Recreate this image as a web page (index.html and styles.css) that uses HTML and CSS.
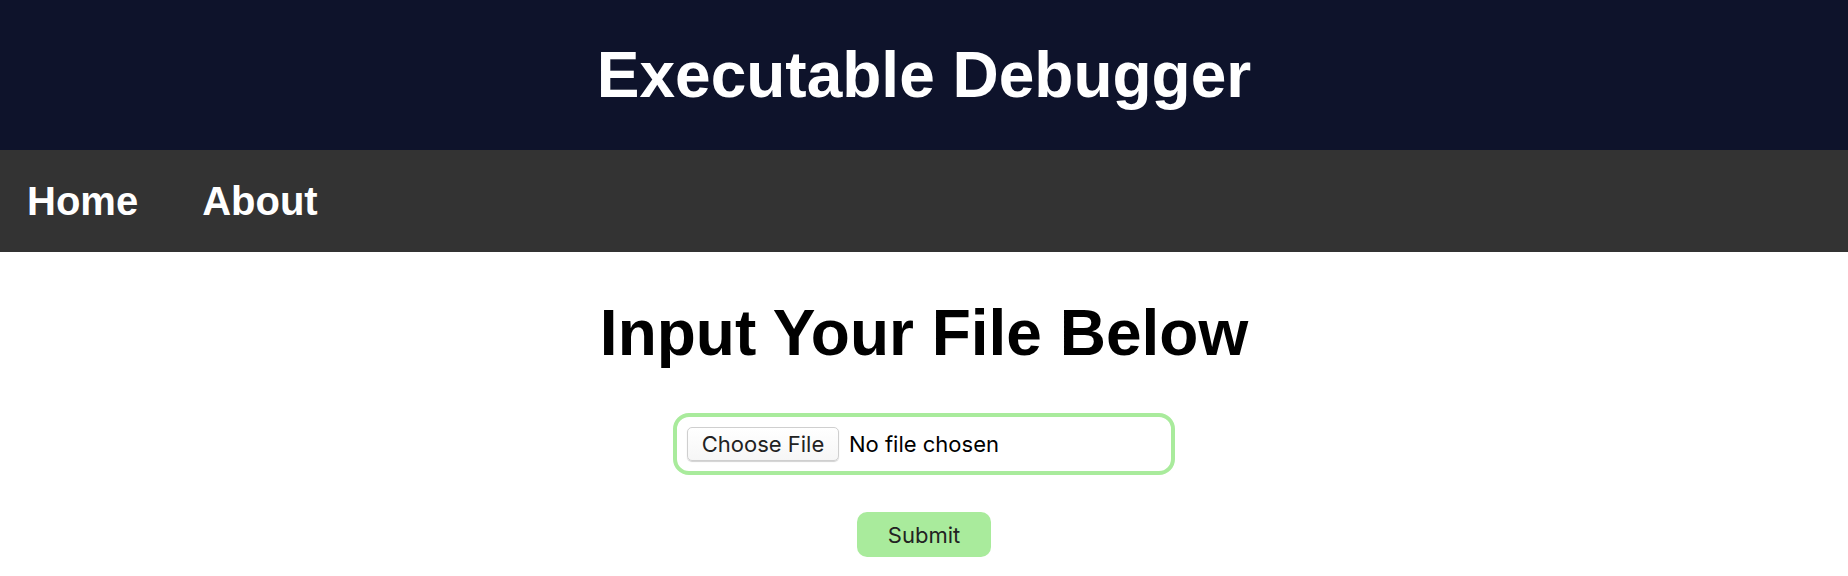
FILE: index.html
```html
<!DOCTYPE html>
<html lang="en">
<head>
<meta charset="utf-8">
<title>Executable Debugger</title>
<link rel="stylesheet" href="styles.css">
</head>
<body>
<header class="site-header">
  <h1 class="site-title">Executable Debugger</h1>
</header>
<nav class="site-nav">
  <a class="nav-link" href="#">Home</a>
  <a class="nav-link" href="#">About</a>
</nav>
<main class="content">
  <h2 class="page-heading">Input Your File Below</h2>
  <form class="upload-form">
    <label class="file-box">
      <span class="file-btn">Choose File</span>
      <span class="file-name">No file chosen</span>
    </label>
    <button class="submit-btn" type="button">Submit</button>
  </form>
</main>
</body>
</html>
```
FILE: styles.css
```css
* { box-sizing: border-box; }
html, body { margin: 0; padding: 0; }
body {
  font-family: "Liberation Sans", Arial, sans-serif;
  background: #ffffff;
  color: #000000;
}
.site-header {
  height: 150px;
  background: #0e132b;
  display: flex;
  align-items: center;
  justify-content: center;
}
.site-title {
  margin: 0;
  color: #ffffff;
  font-size: 64px;
  font-weight: 700;
  line-height: normal;
}
.site-nav {
  height: 102px;
  background: #333333;
  display: flex;
  align-items: center;
  gap: 64px;
  padding-left: 27px;
}
.nav-link {
  color: #ffffff;
  text-decoration: none;
  font-size: 40px;
  font-weight: 700;
  line-height: normal;
}
.content {
  display: flex;
  flex-direction: column;
  align-items: center;
}
.page-heading {
  margin: 44px 0 0;
  font-size: 64px;
  font-weight: 700;
  line-height: normal;
}
.upload-form {
  display: flex;
  flex-direction: column;
  align-items: center;
  margin-top: 43px;
}
.file-box {
  width: 502px;
  height: 62px;
  border: 4px solid #a9eb9c;
  border-radius: 16px;
  padding: 0 10px;
  display: flex;
  align-items: center;
  font-family: Inter, "Noto Sans", sans-serif;
  font-size: 22px;
}
.file-btn {
  width: 152px;
  height: 34px;
  border: 1px solid #cfcfcf;
  border-radius: 5px;
  background: linear-gradient(#ffffff, #f6f6f6);
  box-shadow: 0 1px 1px rgba(0, 0, 0, 0.18);
  color: #222222;
  display: flex;
  align-items: center;
  justify-content: center;
  margin-top: -1px;
}
.file-name {
  margin-left: 10px;
  color: #000000;
}
.submit-btn {
  margin-top: 37px;
  width: 134px;
  height: 45px;
  border: none;
  border-radius: 10px;
  background: #a9eb9c;
  color: #222222;
  font-family: Inter, "Noto Sans", sans-serif;
  font-size: 22px;
  padding: 0;
}
```
